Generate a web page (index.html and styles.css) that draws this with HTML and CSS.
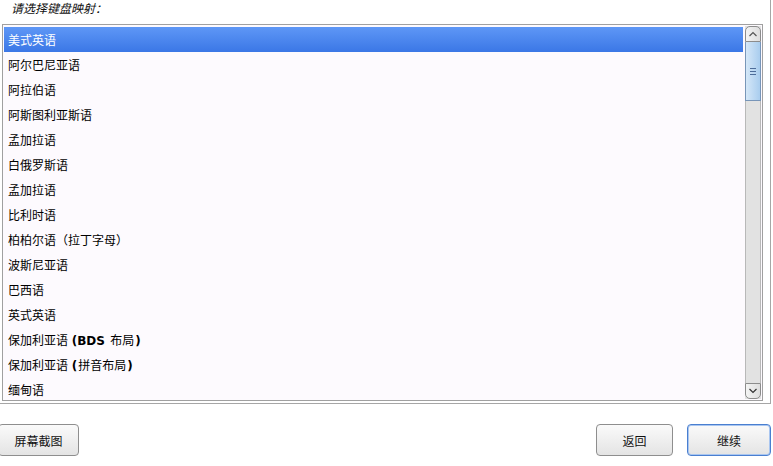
FILE: index.html
```html
<!DOCTYPE html>
<html lang="zh-CN">
<head>
    <meta charset="UTF-8">
    <link rel="stylesheet" href="styles.css">
</head>
<body>
    <div class="panel">
        <div class="prompt">请选择键盘映射：</div>
        <div class="listbox">
            <div class="rows">
                <div class="row selected">美式英语</div>
                <div class="row">阿尔巴尼亚语</div>
                <div class="row">阿拉伯语</div>
                <div class="row">阿斯图利亚斯语</div>
                <div class="row">孟加拉语</div>
                <div class="row">白俄罗斯语</div>
                <div class="row">孟加拉语</div>
                <div class="row">比利时语</div>
                <div class="row">柏柏尔语（拉丁字母）</div>
                <div class="row">波斯尼亚语</div>
                <div class="row">巴西语</div>
                <div class="row">英式英语</div>
                <div class="row">保加利亚语 <span class="latin">(BDS </span>布局<span class="latin">)</span></div>
                <div class="row">保加利亚语 <span class="latin">(</span>拼音布局<span class="latin">)</span></div>
                <div class="row">缅甸语</div>
            </div>
            <div class="scrollbar">
                <div class="sb-btn sb-up">
                    <svg width="10" height="6" viewBox="0 0 10 6"><path d="M1.5 5 L5 1.5 L8.5 5" fill="none" stroke="#555" stroke-width="1.2"/></svg>
                </div>
                <div class="sb-thumb">
                    <div class="grip"></div>
                    <div class="grip"></div>
                    <div class="grip"></div>
                </div>
                <div class="sb-track"></div>
                <div class="sb-btn sb-down">
                    <svg width="10" height="6" viewBox="0 0 10 6"><path d="M1.5 1 L5 4.5 L8.5 1" fill="none" stroke="#333" stroke-width="1.2"/></svg>
                </div>
            </div>
        </div>
    </div>
    <div class="footer">
        <button class="btn btn-shot">屏幕截图</button>
        <div class="spacer"></div>
        <button class="btn">返回</button>
        <button class="btn btn-default">继续</button>
    </div>
</body>
</html>
```

FILE: styles.css
```css
html, body {
    margin: 0;
    padding: 0;
    background: #ffffff;
    color: #000000;
    font-family: "Noto Sans CJK SC", "DejaVu Sans", sans-serif;
    font-size: 12px;
}

.panel {
    width: 770px;
    height: 403px;
    border-right: 1px solid #a6a6a6;
    border-bottom: 1px solid #a6a6a6;
    display: flex;
    flex-direction: column;
}

.prompt {
    height: 24px;
    padding-left: 11px;
    line-height: 16px;
    font-style: italic;
    font-size: 12px;
    color: #111;
}

.listbox {
    margin-left: 2px;
    width: 759px;
    height: 375px;
    border: 1px solid #a0a0a0;
    background: #fdfafe;
    display: flex;
    overflow: hidden;
}

.rows {
    flex: 1;
    padding: 2px 0 0 1px;
    overflow: hidden;
}

.row {
    height: 25px;
    line-height: 25px;
    padding-left: 4px;
    white-space: nowrap;
}

.row.selected {
    background: linear-gradient(#5e97f6, #3b77e6);
    color: #ffffff;
}

.latin {
    font-family: "DejaVu Sans", sans-serif;
    font-weight: bold;
    font-size: 12px;
    margin: 0 1px;
}

.scrollbar {
    width: 16px;
    margin: 1px 1px 1px 2px;
    display: flex;
    flex-direction: column;
    background: #e2e2e2;
}

.sb-btn {
    height: 14px;
    border: 1px solid #8c8c8c;
    background: linear-gradient(to right, #f4f4f4, #dedede);
    display: flex;
    align-items: center;
    justify-content: center;
}

.sb-up {
    border-radius: 5px 5px 0 0;
}

.sb-down {
    border-radius: 0 0 5px 5px;
}

.sb-thumb {
    height: 58px;
    border: 1px solid #7895b8;
    border-top: none;
    background: linear-gradient(to right, #d5e7f8, #a9cdee);
    display: flex;
    flex-direction: column;
    align-items: center;
    justify-content: center;
    gap: 2px;
}

.grip {
    width: 6px;
    height: 1px;
    background: #4d6d9a;
}

.sb-track {
    flex: 1;
    border-left: 1px solid #b8b8b8;
    border-right: 1px solid #b8b8b8;
}

.footer {
    display: flex;
    align-items: center;
    gap: 14px;
    margin-top: 20px;
    padding-right: 2px;
}

.spacer {
    flex: 1;
}

.btn {
    height: 32px;
    width: 77px;
    border: 1px solid #8e8e8e;
    border-radius: 4px;
    background: linear-gradient(#fafafa, #e4e4e4);
    font-family: "Noto Sans CJK SC", "DejaVu Sans", sans-serif;
    font-size: 12px;
    color: #111;
    padding: 0;
}

.btn-shot {
    margin-left: -2px;
    width: 81px;
}

.btn-default {
    width: 84px;
    border: 1px solid #4a7fd0;
    box-shadow: inset 0 0 0 1px #a9c6f0;
}
```
